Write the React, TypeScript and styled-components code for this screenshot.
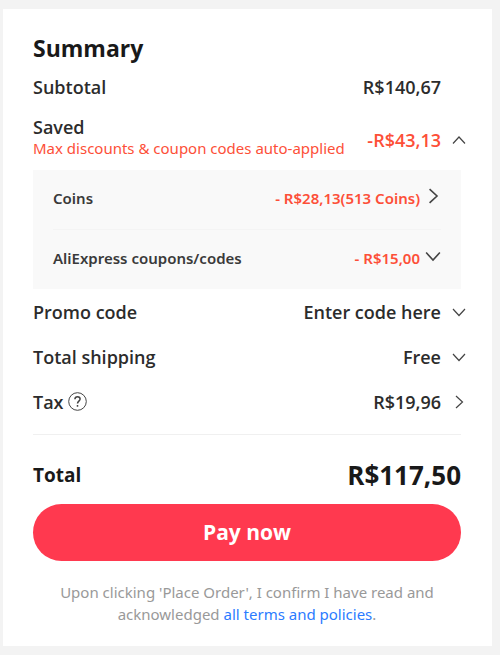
import React from "react";
import styled, { createGlobalStyle } from "styled-components";

const GlobalStyle = createGlobalStyle`
  * { box-sizing: border-box; }
  body { margin: 0; background: #f3f3f3; font-family: "Open Sans", sans-serif; color: #222; }
  button, a { font-family: inherit; }
`;

const Page = styled.main`
  padding: 9px 8px 9px 3px;
`;

const Card = styled.section`
  background: #fff;
  padding: 23px 31px 21px 30px;
`;

const Title = styled.h1`
  margin: 0;
  font-size: 23px;
  line-height: 32px;
  font-weight: 700;
  color: #191919;
`;

const Row = styled.div<{ $height: number }>`
  display: flex;
  align-items: center;
  justify-content: space-between;
  min-height: ${(p) => p.$height}px;
  margin-right: -5px;
  font-size: 18px;
  line-height: 24px;
  font-weight: 600;
  color: #2c2c2c;
`;

const Label = styled.span`
  display: flex;
  align-items: center;
  gap: 4px;
`;

const SavedText = styled.div`
  padding-bottom: 6px;
`;

const SavedLabel = styled.div`
  line-height: 22px;
`;

const Hint = styled.div`
  font-family: "Noto Sans", sans-serif;
  font-size: 15px;
  line-height: 20px;
  font-weight: 400;
  color: #fd4f38;
`;

const Value = styled.span`
  padding-right: 25px;
`;

const ValueButton = styled.button<{ $red?: boolean; $gap?: number }>`
  display: flex;
  align-items: center;
  gap: ${(p) => p.$gap ?? 11}px;
  padding: 0;
  border: 0;
  background: none;
  color: ${(p) => (p.$red ? "#fd4f38" : "inherit")};
  font-family: inherit;
  font-size: inherit;
  line-height: inherit;
  font-weight: inherit;
  cursor: pointer;
`;

const HelpButton = styled.button`
  display: flex;
  padding: 0;
  border: 0;
  background: none;
  cursor: pointer;
`;

const Panel = styled.div`
  background: #f9f9f9;
  padding: 0 20px;
`;

const PanelRow = styled.div`
  display: flex;
  align-items: center;
  justify-content: space-between;
  height: 59px;
  padding-bottom: 3px;
  font-family: "Noto Sans", sans-serif;
  font-size: 15px;
  line-height: 20px;
  font-weight: 600;
  color: #3a3a3a;
  & + & { border-top: 1px solid #f4f4f4; height: 60px; }
  ${ValueButton} { align-items: flex-start; }
`;

const Divider = styled.hr`
  margin: 10px 0 16px;
  border: 0;
  border-top: 1px solid #f0f0f0;
`;

const TotalRow = styled.div`
  display: flex;
  align-items: center;
  justify-content: space-between;
  height: 47px;
  font-size: 19px;
  font-weight: 700;
  color: #191919;
`;

const TotalValue = styled.strong`
  font-size: 26px;
  line-height: 36px;
  font-weight: 700;
`;

const PayButton = styled.button`
  display: block;
  width: 100%;
  height: 57px;
  margin-top: 6px;
  padding: 0 0 2px;
  border: 0;
  border-radius: 29px;
  background: #ff394f;
  color: #fff;
  font-size: 21px;
  font-weight: 700;
  cursor: pointer;
`;

const Terms = styled.p`
  margin: 20px 0 0;
  text-align: center;
  font-family: "Noto Sans", sans-serif;
  font-size: 15px;
  line-height: 22px;
  color: #999;
`;

const TermsLink = styled.a`
  color: #2b7bff;
  text-decoration: none;
`;

const Icon = styled.svg`
  display: block;
  flex: none;
  fill: none;
  stroke: #444;
`;

type Direction = "up" | "down" | "right";

const paths: Record<Direction, string> = {
  up: "M1 10.5 L7 4 L13 10.5",
  down: "M1 4 L7 10.5 L13 4",
  right: "M4 1 L10.5 7 L4 13",
};

function Chevron({ to, bold }: { to: Direction; bold?: boolean }) {
  const size = bold ? 16 : 14;
  return (
    <Icon width={size} height={size} viewBox="0 0 14 14" strokeWidth={bold ? 1.4 : 1.2} aria-hidden="true">
      <path d={paths[to]} />
    </Icon>
  );
}

export default function App() {
  return (
    <>
      <GlobalStyle />
      <Page>
        <Card>
          <Title>Summary</Title>
          <Row $height={46}>
            <Label>Subtotal</Label>
            <Value>R$140,67</Value>
          </Row>
          <Row $height={60}>
            <SavedText>
              <SavedLabel>Saved</SavedLabel>
              <Hint>Max discounts &amp; coupon codes auto-applied</Hint>
            </SavedText>
            <ValueButton $red aria-label="Saved -R$43,13" aria-expanded="true">
              -R$43,13
              <Chevron to="up" />
            </ValueButton>
          </Row>
          <Panel>
            <PanelRow>
              <span>Coins</span>
              <ValueButton $red $gap={5}>
                - R$28,13(513 Coins)
                <Chevron to="right" bold />
              </ValueButton>
            </PanelRow>
            <PanelRow>
              <span>AliExpress coupons/codes</span>
              <ValueButton $red $gap={5}>
                - R$15,00
                <Chevron to="down" bold />
              </ValueButton>
            </PanelRow>
          </Panel>
          <Row $height={45}>
            <Label>Promo code</Label>
            <ValueButton>
              Enter code here
              <Chevron to="down" />
            </ValueButton>
          </Row>
          <Row $height={45}>
            <Label>Total shipping</Label>
            <ValueButton>
              Free
              <Chevron to="down" />
            </ValueButton>
          </Row>
          <Row $height={45}>
            <Label>
              Tax
              <HelpButton aria-label="About tax">
                <Icon width="19" height="19" viewBox="0 0 19 19" strokeWidth={1}>
                  <circle cx="9.5" cy="9.5" r="8.8" />
                  <path
                    d="M6.9 7.2C7 5.6 8 4.7 9.5 4.7S12.1 5.6 12.1 7c0 2-2.6 2.2-2.6 4.5M9.5 13v1.7"
                    strokeWidth={1.5}
                  />
                </Icon>
              </HelpButton>
            </Label>
            <ValueButton>
              R$19,96
              <Chevron to="right" />
            </ValueButton>
          </Row>
          <Divider />
          <TotalRow>
            <span>Total</span>
            <TotalValue>R$117,50</TotalValue>
          </TotalRow>
          <PayButton>Pay now</PayButton>
          <Terms>
            Upon clicking 'Place Order', I confirm I have read and acknowledged{" "}
            <TermsLink href="#terms">all terms and policies</TermsLink>.
          </Terms>
        </Card>
      </Page>
    </>
  );
}
